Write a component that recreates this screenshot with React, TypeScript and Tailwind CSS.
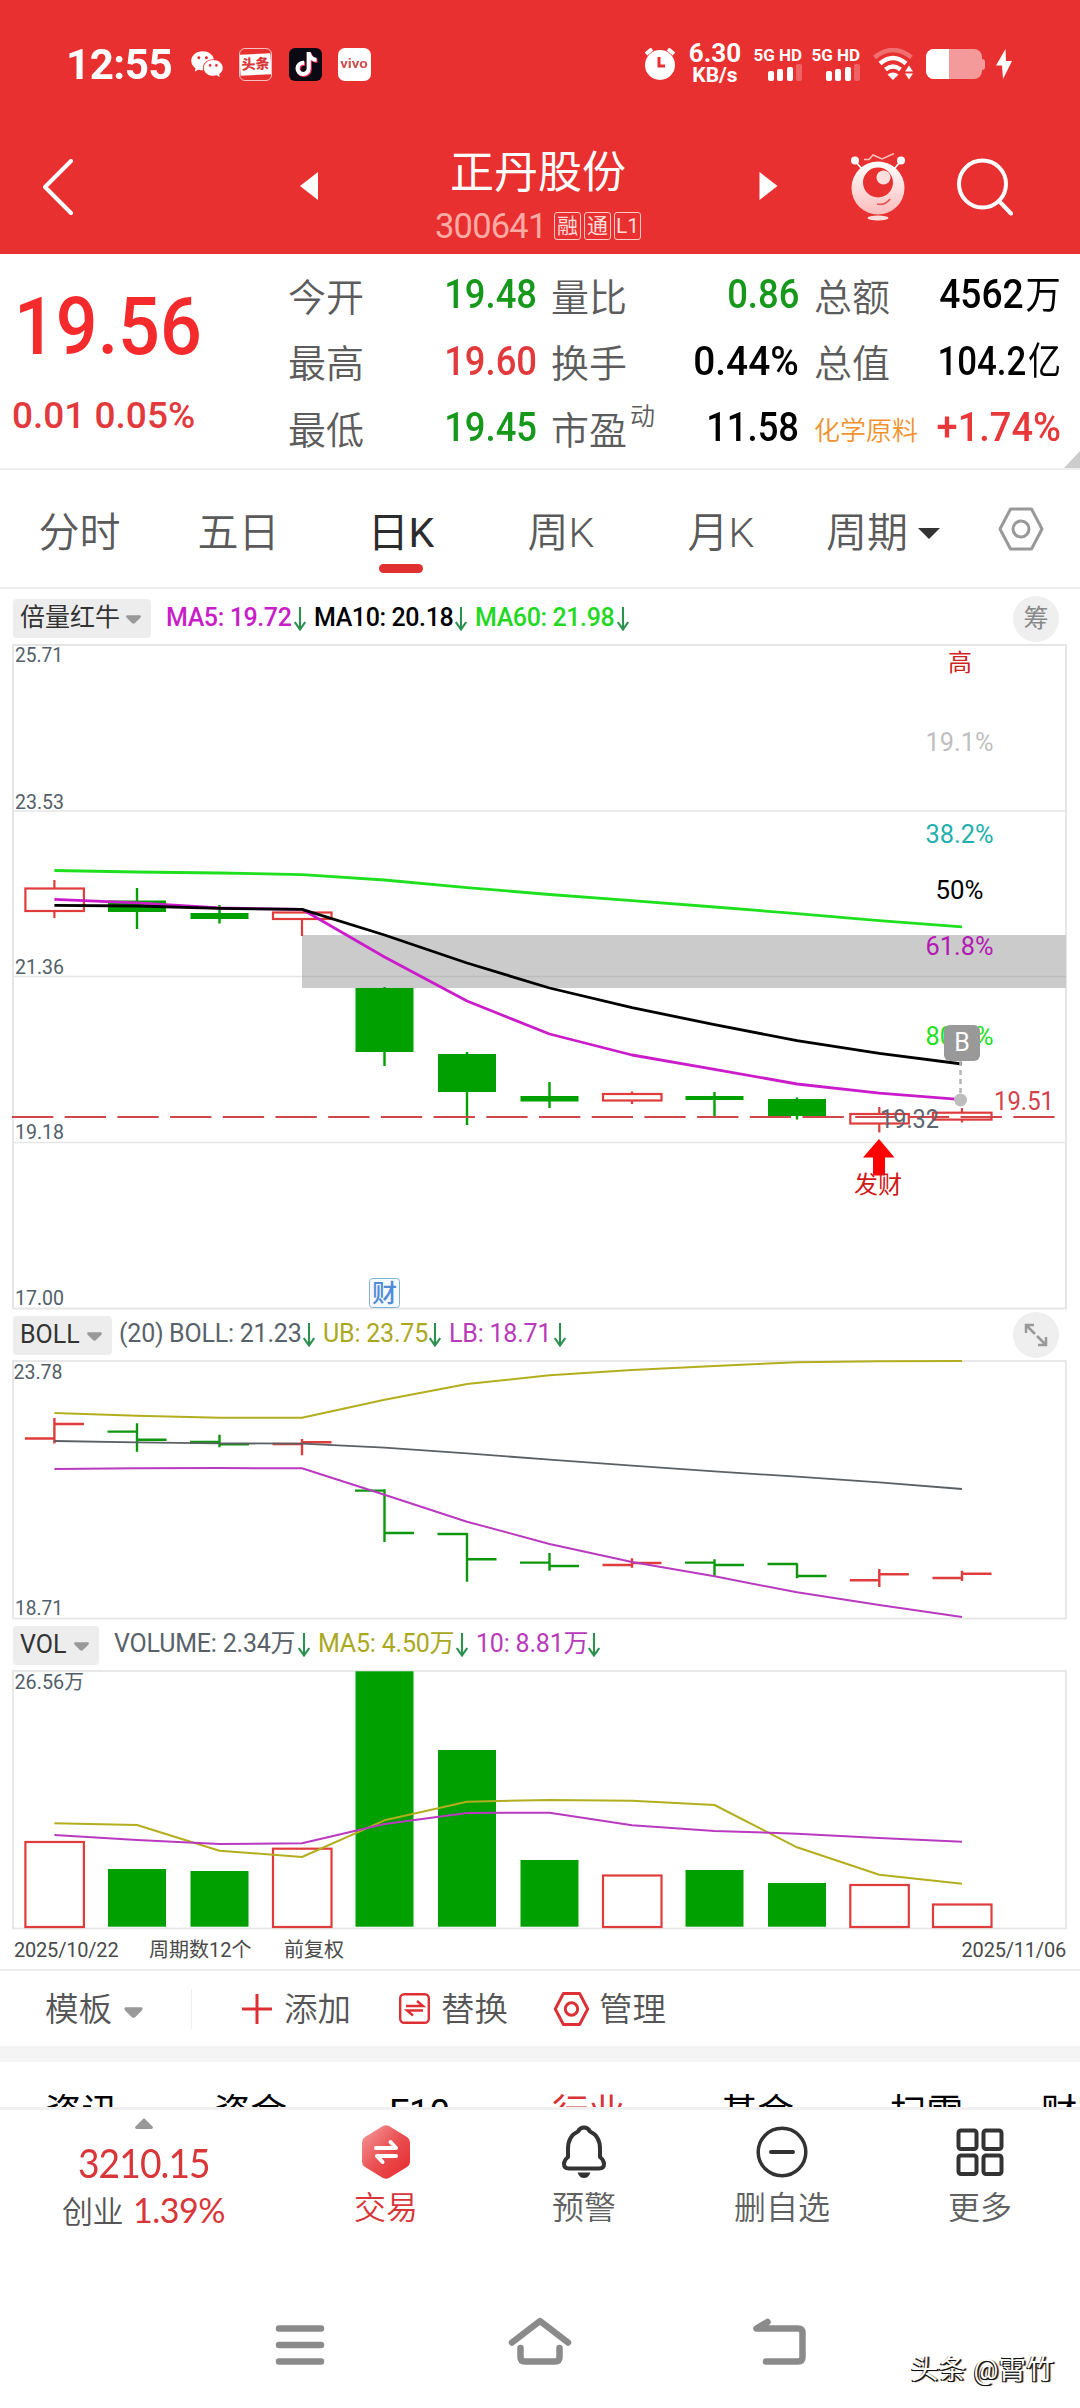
import React from 'react';
import clsx from 'clsx';
import { AiFillWechat } from 'react-icons/ai';
import { FaTiktok } from 'react-icons/fa';

const FONT = "font-['Roboto','Noto_Sans_CJK_SC',sans-serif]";

const GREEN = '#00a000';
const RED = '#e03c3c';
const GRID = '#e6e6e6';

// x centre of every trading day, shared by the three charts
const DAYS = [54.4, 137, 219.5, 302, 384.5, 467, 549.5, 632, 714.5, 797, 879.3, 962];

type Candle = { up: boolean; top: number; bottom: number; high: number; low: number };

const CANDLES: Candle[] = [
  { up: true, top: 888.5, bottom: 911, high: 880, low: 918 },
  { up: false, top: 900.5, bottom: 912, high: 888, low: 929 },
  { up: false, top: 913, bottom: 919, high: 905, low: 923.5 },
  { up: true, top: 912.5, bottom: 919, high: 912, low: 936 },
  { up: false, top: 988, bottom: 1052, high: 987, low: 1066 },
  { up: false, top: 1054, bottom: 1092, high: 1052, low: 1125 },
  { up: false, top: 1096, bottom: 1101.5, high: 1082, low: 1108 },
  { up: true, top: 1094, bottom: 1100.5, high: 1091.5, low: 1104 },
  { up: false, top: 1096, bottom: 1100, high: 1092, low: 1118 },
  { up: false, top: 1099, bottom: 1116, high: 1097.5, low: 1119.5 },
  { up: true, top: 1114, bottom: 1123.5, high: 1107, low: 1132.5 },
  { up: true, top: 1112.7, bottom: 1119.6, high: 1108, low: 1122.5 },
];

// [up, high, low, open, close]
const OHLC: [boolean, number, number, number, number][] = [
  [true, 1418, 1443.5, 1438.5, 1424],
  [false, 1423.3, 1451.7, 1431.6, 1439.7],
  [false, 1434.7, 1447.3, 1442, 1444.3],
  [true, 1439, 1455.3, 1444, 1442.3],
  [false, 1489.3, 1542, 1490.6, 1533],
  [false, 1533, 1581.7, 1534, 1559.3],
  [false, 1553, 1570.7, 1562.6, 1566],
  [true, 1558.3, 1567.7, 1565, 1563],
  [false, 1559.3, 1576.7, 1562.6, 1565],
  [false, 1563.3, 1578.3, 1564, 1576],
  [true, 1569, 1587, 1580.3, 1574.3],
  [true, 1570.7, 1581, 1578, 1573.7],
];

const VOLUMES: [boolean, number][] = [
  [true, 1841], [false, 1869], [false, 1871], [true, 1847.7], [false, 1671.3], [false, 1750],
  [false, 1860], [true, 1874.5], [false, 1870], [false, 1883], [true, 1884], [true, 1903.5],
];

const MA60 = [870.5, 872, 873, 874.6, 880, 887.6, 894.5, 900.6, 907, 913.6, 920.6, 926.8];
const MA5 = [899.3, 902.8, 908, 909.3, 957, 1001, 1034, 1055, 1069.3, 1084, 1093.2, 1099.7];
const MA10 = [905.4, 906, 908.4, 909.3, 935, 963, 988, 1007.7, 1024.6, 1040.7, 1053.3, 1064];
const UB = [1413, 1415.7, 1417.7, 1417.7, 1399.7, 1384, 1375.3, 1370, 1366, 1362.2, 1361.3, 1361];
const MID = [1441, 1442.3, 1443.3, 1443.7, 1447.7, 1453.3, 1459.7, 1465.7, 1471.3, 1476.7, 1482.3, 1489];
const LB = [1469, 1468.3, 1468, 1468.3, 1494.7, 1521.7, 1544, 1562, 1576.3, 1592.3, 1605, 1617];
const VMA5 = [1823.3, 1825, 1850.7, 1857, 1820.3, 1801.7, 1800, 1800.7, 1805, 1847.3, 1874.7, 1883.7];
const VMA10 = [1835, 1840, 1844, 1843.3, 1824, 1813, 1812.7, 1825.3, 1831, 1833.7, 1838, 1841.7];

const LEVELS = [
  { text: '19.1%', y: 751, fill: '#bfbfbf', w: 68 },
  { text: '38.2%', y: 843, fill: '#22b0ae', w: 68 },
  { text: '50%', y: 899, fill: '#000', w: 48 },
  { text: '61.8%', y: 955, fill: '#b418b4', w: 68 },
  { text: '80.9%', y: 1044.5, fill: '#22e022', w: 68 },
];

function Line({ ys, color, width = 2 }: { ys: number[]; color: string; width?: number }) {
  return (
    <polyline
      points={ys.map((y, i) => `${DAYS[i]},${y}`).join(' ')}
      fill="none"
      stroke={color}
      strokeWidth={width}
      strokeLinejoin="round"
    />
  );
}

function AxisLabel({ x = 15, y, w = 48, children }: { x?: number; y: number; w?: number; children: React.ReactNode }) {
  return (
    <text x={x} y={y} fontSize={20} fill="#525e68" textLength={w} lengthAdjust="spacingAndGlyphs">
      {children}
    </text>
  );
}

function Caret({ className }: { className?: string }) {
  return (
    <svg viewBox="0 0 20 12" className={clsx('shrink-0', className)}>
      <path d="M2 1h16q1.5 1.5 0 3l-6.500 6.500q-1.500 1-3 0L2 4Q.5 2.500 2 1z" fill="currentColor" />
    </svg>
  );
}

function DownArrow() {
  return (
    <svg viewBox="0 0 12 24" className="h-[24px] w-[12px] shrink-0" fill="none" stroke="#2c9150" strokeWidth="2.100">
      <path d="M6 0v23M.8 15l5.200 7.500 5.200-7.500" />
    </svg>
  );
}

function Hexagon({ className, strokeWidth }: { className: string; strokeWidth: number }) {
  return (
    <svg viewBox="0 0 46 44" className={className} fill="none" stroke="currentColor" strokeWidth={strokeWidth} strokeLinejoin="round">
      <path d="M12.500 2h21L44 22 33.500 42h-21L2 22z" />
      <circle cx="23" cy="22" r="8" />
    </svg>
  );
}

function StatusBar() {
  return (
    <div className="flex h-[128px] items-center pl-[66px] text-white">
      <span className="w-[106px] origin-left scale-x-[0.98] text-[43px] leading-none font-bold tracking-[-0.5px]">12:55</span>
      <AiFillWechat className="ml-[17px] size-[36px]" />
      <div className="ml-[14px] flex size-[33px] flex-col justify-center overflow-hidden rounded-[6px] border border-white/70">
        <span className="-rotate-3 bg-white text-center text-[14px] leading-[21px] font-black text-[#d83a3a]">头条</span>
      </div>
      <div className="ml-[17px] flex size-[33px] items-center justify-center rounded-[6px] bg-[#0b0a14]">
        <FaTiktok className="size-[24px] drop-shadow-[1px_1px_0_#fe2c55]" />
      </div>
      <div className="ml-[16px] flex size-[33px] items-center justify-center rounded-[7px] bg-white">
        <span className="scale-x-125 text-[12px] leading-none font-bold text-[#cf5050]">vivo</span>
      </div>

      <svg viewBox="0 0 32 32" className="ml-[273px] h-[32px] w-[32px]" fill="#fff">
        <circle cx="16" cy="17" r="15" />
        <path d="M2 6l6-5M24 1l6 5" stroke="#fff" strokeWidth="4" />
        <path d="M15 9v9h6" fill="none" stroke="#e83030" strokeWidth="3" />
      </svg>
      <div className="ml-[12px] flex w-[54px] flex-col items-center leading-none font-bold">
        <span className="text-[26px] leading-[23px]">6.30</span>
        <span className="text-[21px] leading-[21px]">KB/s</span>
      </div>
      <Signal className="ml-[12px]" />
      <Signal className="ml-[10px]" />
      <svg viewBox="0 0 40 32" className="ml-[13px] h-[32px] w-[40px]" fill="none" stroke="#fff" strokeWidth="4.500">
        <path d="M1.500 9.500Q20-5.500 38.500 9.500" strokeOpacity=".3" />
        <path d="M7 15.500Q20 4.500 33 15.500M12.500 21.500q7.500-6 15 0" />
        <path d="M14.500 26.500q5.500-4 11 0L20 32z" fill="#fff" stroke="none" />
        <path d="M32 23.500l4-6 4 6zM32 25.500l4 6 4-6z" fill="#fff" stroke="none" />
      </svg>
      <div className="ml-[13px] flex items-center">
        <div className="flex h-[30px] w-[56px] overflow-hidden rounded-[8px] bg-[#f59a9a]">
          <div className="w-[23px] bg-white" />
        </div>
        <div className="h-[11px] w-[3px] rounded-r-full bg-[#f59a9a]" />
      </div>
      <svg viewBox="0 0 16 30" className="ml-[11px] h-[30px] w-[16px]" fill="#fff">
        <path d="M9.500 0L0 16.500h6L7 30l9-18H10z" />
      </svg>
    </div>
  );
}

function Signal({ className }: { className: string }) {
  return (
    <div className={clsx('flex w-[48px] flex-col items-end', className)}>
      <span className="text-[17px] leading-[14px] font-bold whitespace-nowrap">5G HD</span>
      <div className="mt-[2px] flex h-[17px] items-end gap-[3.500px]">
        <i className="h-[10px] w-[6px] rounded-[2px] bg-white" />
        <i className="h-[12px] w-[6px] rounded-[2px] bg-white" />
        <i className="h-[14px] w-[6px] rounded-[2px] bg-white" />
        <i className="h-[17px] w-[6px] rounded-[2px] bg-white/25" />
      </div>
    </div>
  );
}

function TitleBar() {
  return (
    <div className="flex h-[126px] items-start text-white">
      <svg viewBox="0 0 30 56" className="mt-[31px] ml-[43px] h-[56px] w-[30px]" fill="none" stroke="#fff" strokeWidth="4" strokeLinecap="round" strokeLinejoin="round">
        <path d="M28 2L2 28l26 26" />
      </svg>
      <svg viewBox="0 0 18 28" className="mt-[44px] ml-[227px] h-[28px] w-[18px]" fill="#fff">
        <path d="M18 0v28L0 14z" />
      </svg>
      <div className="mt-[21px] ml-[111px] flex w-[218px] flex-col items-center">
        <h1 className="text-[44px] leading-[48px] whitespace-nowrap">正丹股份</h1>
        <div className="mt-[15px] flex items-center gap-[3px]">
          <span className="mr-[6px] w-[110px] text-[34.500px] leading-[28px] tracking-[-0.8px] text-[#fbaaa4]">300641</span>
          {['融', '通', 'L1'].map((tag) => (
            <span key={tag} className="flex h-[28px] w-[27px] items-center justify-center rounded-[3px] border border-[#ffc9c4] text-[21px] leading-none text-[#ffdcd8]">
              {tag}
            </span>
          ))}
        </div>
      </div>
      <svg viewBox="0 0 18 28" className="mt-[44px] ml-[112px] h-[28px] w-[19px]" fill="#fff">
        <path d="M0 0v28l18-14z" />
      </svg>
      <svg viewBox="0 0 54 68" className="mt-[25px] ml-[73px] h-[68px] w-[54px]">
        <defs>
          <linearGradient id="mascot" x1="0" y1="0" x2="0" y2="1">
            <stop offset="0" stopColor="#fff" />
            <stop offset="1" stopColor="#fbbcbc" />
          </linearGradient>
        </defs>
        <path d="M4 8l7 8M50 8l-7 8" stroke="#fff" strokeWidth="1.800" />
        <circle cx="4" cy="7.500" r="4" fill="#fff" />
        <circle cx="50" cy="7.500" r="4" fill="#fff" />
        <path d="M13 6.500h5l4-4.500 9 4 12-5.500" stroke="#fbc0bc" strokeWidth="1.500" fill="none" />
        <circle cx="27" cy="35" r="26.500" fill="url(#mascot)" />
        <circle cx="27" cy="29.500" r="15" fill="#e83030" />
        <circle cx="32.500" cy="24.500" r="7" fill="#fde0de" />
        <path d="M26 51q8 2 13-5" stroke="#e05555" strokeWidth="1.800" fill="none" />
        <ellipse cx="27" cy="65" rx="10.500" ry="2.500" fill="#fdd" />
      </svg>
      <svg viewBox="0 0 56 58" className="mt-[30px] ml-[52px] h-[58px] w-[56px]" fill="none" stroke="#fff" strokeWidth="4" strokeLinecap="round">
        <circle cx="25.500" cy="26" r="23.500" />
        <path d="M42 43l12 12.500" />
      </svg>
    </div>
  );
}

type Field = { label: string; sup?: string; value: string; color: string; unit?: string; small?: boolean; scale?: string };

const COL_A: Field[] = [
  { label: '今开', value: '19.48', color: 'text-[#16981a]' },
  { label: '最高', value: '19.60', color: 'text-[#e23a3c]' },
  { label: '最低', value: '19.45', color: 'text-[#16981a]' },
];
const COL_B: Field[] = [
  { label: '量比', value: '0.86', color: 'text-[#16981a]' },
  { label: '换手', value: '0.44%', color: 'text-black', scale: 'scale-x-[0.97]' },
  { label: '市盈', sup: '动', value: '11.58', color: 'text-black' },
];
const COL_C: Field[] = [
  { label: '总额', value: '4562', unit: '万', color: 'text-black', scale: 'scale-x-[0.93]' },
  { label: '总值', value: '104.2', unit: '亿', color: 'text-black', scale: 'scale-x-[0.87]' },
  { label: '化学原料', value: '+1.74%', color: 'text-[#e8383a]', small: true, scale: 'scale-x-[0.95]' },
];

function QuoteColumn({ fields, className }: { fields: Field[]; className: string }) {
  return (
    <div className={clsx('flex flex-col pt-[11px]', className)}>
      {fields.map((f) => (
        <div key={f.label} className="flex h-[66.500px] items-center justify-between whitespace-nowrap">
          {f.small ? (
            <span className="text-[26px] font-[350] text-[#f0922e]">{f.label}</span>
          ) : (
            <span className="flex text-[38px] font-[350] text-[#5c5c5c]">
              {f.label}
              {f.sup && <sup className="top-0 mt-[1px] ml-[3px] text-[25px] leading-none">{f.sup}</sup>}
            </span>
          )}
          <span className={clsx('mt-[-6px] flex origin-right items-center text-[40px] font-medium', f.scale ?? 'scale-x-[0.91]', f.color)}>
            {f.value}
            {f.unit && <span className="ml-[2px] text-[38px] font-normal">{f.unit}</span>}
          </span>
        </div>
      ))}
    </div>
  );
}

function Quote() {
  return (
    <section className="relative flex h-[216px] border-b-2 border-[#eee] bg-white">
      <div className="w-[275px] text-[#f52a2c]">
        <div className="mt-[33px] ml-[14px] origin-left scale-x-[0.92] text-[80px] leading-[80px] font-medium">19.56</div>
        <div className="mt-[27px] ml-[12px] origin-left text-[37px] leading-[44px] font-medium whitespace-nowrap text-[#e23a3c]">
          0.01 0.05%
        </div>
      </div>
      <QuoteColumn fields={COL_A} className="ml-[13px] w-[249px]" />
      <QuoteColumn fields={COL_B} className="ml-[14px] w-[248px]" />
      <QuoteColumn fields={COL_C} className="ml-[15px] w-[247px]" />
      <svg viewBox="0 0 16 17" className="absolute right-0 bottom-0 h-[17px] w-[16px]">
        <path d="M16 0v17H0z" fill="#ccc" />
      </svg>
    </section>
  );
}

const TABS = [
  { label: '分时', width: 'w-[159px]' },
  { label: '五日', width: 'w-[159px]' },
  { label: '日K', width: 'w-[166px]', active: true },
  { label: '周K', width: 'w-[154px]' },
  { label: '月K', width: 'w-[166px]' },
];

function PeriodTabs() {
  return (
    <nav className="flex h-[119px] items-start border-b-2 border-[#eee] text-[41px] font-[350] text-[#5a5a5a]">
      {TABS.map((tab) => (
        <div key={tab.label} className={clsx('flex flex-col items-center pt-[36px]', tab.width, tab.active && 'font-normal text-[#2c2c2c]')}>
          <span className="leading-[54px]">{tab.label}</span>
          {tab.active && <span className="mt-[4px] h-[9px] w-[44px] rounded-full bg-[#e03030]" />}
        </div>
      ))}
      <div className="ml-[22px] flex items-center pt-[36px]">
        <span className="leading-[54px]">周期</span>
        <svg viewBox="0 0 22 11" className="ml-[10px] h-[11px] w-[22px]">
          <path d="M0 0h22L11 11z" fill="#333" />
        </svg>
      </div>
      <Hexagon className="mt-[37px] ml-[58px] h-[44px] w-[46px] text-[#999]" strokeWidth={3} />
    </nav>
  );
}

type Legend = { text: string; color: string; width: string; gap: string; arrow?: boolean };

const MA_LEGEND: Legend[] = [
  { text: 'MA5: 19.72', color: 'text-[#c81ec8]', width: 'w-[128px]', gap: 'ml-[15px]', arrow: true },
  { text: 'MA10: 20.18', color: 'text-black', width: 'w-[141px]', gap: 'ml-[8px]', arrow: true },
  { text: 'MA60: 21.98', color: 'text-[#22d822]', width: 'w-[142px]', gap: 'ml-[8px]', arrow: true },
];
const BOLL_LEGEND: Legend[] = [
  { text: '(20)', color: 'text-[#5a6269]', width: 'w-[41px]', gap: 'ml-[7px]' },
  { text: 'BOLL: 21.23', color: 'text-[#5a6269]', width: 'w-[134px]', gap: 'ml-[9px]', arrow: true },
  { text: 'UB: 23.75', color: 'text-[#aaa81e]', width: 'w-[106px]', gap: 'ml-[8px]', arrow: true },
  { text: 'LB: 18.71', color: 'text-[#b93ab9]', width: 'w-[105px]', gap: 'ml-[8px]', arrow: true },
];
const VOL_LEGEND: Legend[] = [
  { text: 'VOLUME: 2.34万', color: 'text-[#5a6269]', width: 'w-[184px]', gap: 'ml-[15px]', arrow: true },
  { text: 'MA5: 4.50万', color: 'text-[#aaa81e]', width: 'w-[138px]', gap: 'ml-[8px]', arrow: true },
  { text: '10: 8.81万', color: 'text-[#b93ab9]', width: 'w-[112px]', gap: 'ml-[8px]', arrow: true },
];

function LegendRow({ name, chip, items, className, medium, children }: {
  name: string;
  chip: string;
  items: Legend[];
  className: string;
  medium?: boolean;
  children?: React.ReactNode;
}) {
  return (
    <div className={clsx('flex items-center pl-[13px] text-[25px]', className)}>
      <div className={clsx('flex h-[39px] items-center justify-between rounded-[4px] bg-[#ededed] pr-[9px] pl-[7px] text-[#333]', chip)}>
        <span className="mt-[-2px] leading-none whitespace-nowrap">{name}</span>
        <Caret className="mt-[2px] h-[11px] w-[17px] text-[#999]" />
      </div>
      {items.map((item) => (
        <React.Fragment key={item.text}>
          <span className={clsx('mt-[-3px] leading-none whitespace-nowrap', medium ? 'font-medium tracking-[-0.4px]' : 'tracking-[-0.2px]', item.color, item.width, item.gap)}>
            {item.text}
          </span>
          {item.arrow && <DownArrow />}
        </React.Fragment>
      ))}
      <div className="mr-[21px] ml-auto">{children}</div>
    </div>
  );
}

function KChart() {
  return (
    <svg viewBox="0 644 1080 666" className="block h-[666px] w-[1080px]">
      <rect x="13" y="645" width="1053" height="663.500" fill="none" stroke={GRID} strokeWidth="2" />
      <rect x="302" y="935" width="764" height="53" fill="#cbcbcb" />
      {[811, 1142.5].map((y) => (
        <path key={y} d={`M13 ${y}H1066`} stroke={GRID} strokeWidth="1.500" />
      ))}
      <path d="M13 976.500H302" stroke={GRID} strokeWidth="1.500" />
      <path d="M302 976.500H1066" stroke="#bcbcbc" strokeWidth="1.500" />

      {CANDLES.map((c, i) => {
        const x = DAYS[i];
        return c.up ? (
          <g key={i} stroke={RED} strokeWidth="2.200" fill="#fff">
            <path d={`M${x} ${c.high}V${c.low}`} />
            <rect x={x - 29} y={c.top} width={58.5} height={c.bottom - c.top} />
          </g>
        ) : (
          <g key={i} fill={GREEN}>
            <rect x={x - 29} y={c.top} width={58} height={c.bottom - c.top} />
            <rect x={x - 1.2} y={c.high} width={2.4} height={c.low - c.high} />
          </g>
        );
      })}

      <Line ys={MA60} color="#1fe01f" width={2.8} />
      <Line ys={MA5} color="#cb1ccb" width={2.8} />
      <Line ys={MA10} color="#000" width={2.8} />
      <path d="M12 1117H1057" stroke="#d0464b" strokeWidth="1.800" strokeDasharray="41.300 11.400" />

      <AxisLabel y={661.5}>25.71</AxisLabel>
      <AxisLabel y={808.5} w={49}>23.53</AxisLabel>
      <AxisLabel y={973.5} w={49}>21.36</AxisLabel>
      <AxisLabel y={1139} w={49}>19.18</AxisLabel>
      <AxisLabel y={1305} w={49}>17.00</AxisLabel>

      <text x="960" y="671" textAnchor="middle" fontSize="24" fill="#cf1f1f">高</text>
      {LEVELS.map((l) => (
        <text key={l.text} x={959.5 - l.w / 2} y={l.y} fontSize="25" fill={l.fill} textLength={l.w} lengthAdjust="spacingAndGlyphs">{l.text}</text>
      ))}
      <text x="994" y="1109.500" fontSize="25" fill="#d3424a" textLength="60" lengthAdjust="spacingAndGlyphs">19.51</text>
      <text x="880" y="1127.500" fontSize="25" fill="#5d6670" textLength="59" lengthAdjust="spacingAndGlyphs">19.32</text>

      <path d="M960.500 1061v34" stroke="#b5b5b5" strokeWidth="2.500" strokeDasharray="5 4" />
      <rect x="944" y="1025" width="36" height="36" rx="6" fill="#999" />
      <text x="962" y="1051" textAnchor="middle" fontSize="25" fill="#fff">B</text>
      <circle cx="960.500" cy="1100" r="6.500" fill="#bdbdbd" />

      <path d="M879 1139l15.500 18.500h-9.500v18h-12v-18h-10z" fill="#f00" />
      <text x="878" y="1193" textAnchor="middle" fontSize="24" fill="#d01818">发财</text>

      <rect x="369.500" y="1278.500" width="30" height="29" rx="3" fill="#f5faff" stroke="#7fb3d8" />
      <text x="384.500" y="1302" textAnchor="middle" fontSize="25" fontWeight="500" fill="#4f8bd6">财</text>
    </svg>
  );
}

function BollChart() {
  return (
    <svg viewBox="0 1360 1080 260" className="block h-[260px] w-[1080px]">
      <rect x="13" y="1361" width="1053" height="257.500" fill="none" stroke={GRID} strokeWidth="1.800" />
      {OHLC.map(([up, high, low, open, close], i) => (
        <path
          key={i}
          d={`M${DAYS[i]} ${high}V${low}M${DAYS[i] - 29.5} ${open}h29.5M${DAYS[i]} ${close}h29.5`}
          stroke={up ? RED : '#0f960f'}
          strokeWidth="2.400"
          fill="none"
        />
      ))}
      <Line ys={UB} color="#b2ae1e" />
      <Line ys={MID} color="#5a6064" width={1.8} />
      <Line ys={LB} color="#b93ac0" />
      <AxisLabel x={13.5} y={1378.5} w={49}>23.78</AxisLabel>
      <AxisLabel y={1615} w={48}>18.71</AxisLabel>
    </svg>
  );
}

function VolumeChart() {
  return (
    <svg viewBox="0 1670 1080 260" className="block h-[260px] w-[1080px]">
      <rect x="13" y="1671" width="1053" height="257.500" fill="none" stroke={GRID} strokeWidth="1.800" />
      {VOLUMES.map(([up, top], i) =>
        up ? (
          <rect key={i} x={DAYS[i] - 29} y={top + 1} width={58.5} height={1926 - top} fill="#fff" stroke={RED} strokeWidth="2.200" />
        ) : (
          <rect key={i} x={DAYS[i] - 29} y={top} width={58} height={1926.7 - top} fill={GREEN} />
        ),
      )}
      <Line ys={VMA5} color="#b2ae1e" />
      <Line ys={VMA10} color="#b93ac0" />
      <AxisLabel x={14.5} y={1688.5} w={69.5}>26.56万</AxisLabel>
    </svg>
  );
}

function Toolbar() {
  return (
    <div className="flex h-[77px] items-center border-t-2 border-[#ececec] pl-[45px] text-[33.500px] font-[350] text-[#555]">
      <span className="mt-[3px]">模板</span>
      <Caret className="mt-[7px] ml-[11px] h-[13px] w-[21px] text-[#999]" />
      <i className="ml-[47px] h-[40px] w-px bg-[#eee]" />
      <svg viewBox="0 0 30 30" className="ml-[50px] size-[30px]" stroke="#dd3034" strokeWidth="3">
        <path d="M15 0v30M0 15h30" />
      </svg>
      <span className="mt-[3px] ml-[12px]">添加</span>
      <svg viewBox="0 0 31 31" className="ml-[48px] size-[31px]" fill="none" stroke="#dd3034" strokeWidth="2.400">
        <rect x="1.200" y="1.200" width="28.600" height="28.600" rx="4" />
        <path d="M7 13h17l-6-5M24 17.500H8l6 5" />
      </svg>
      <span className="mt-[3px] ml-[11px]">替换</span>
      <Hexagon className="ml-[45px] h-[34px] w-[37px] text-[#dd3034]" strokeWidth={3.8} />
      <span className="mt-[3px] ml-[9px]">管理</span>
    </div>
  );
}

const INFO_TABS = ['资讯', '资金', 'F10', '行业', '基金', '扫雷', '财富号'];

function InfoTabs() {
  return (
    <div className="h-[64px] overflow-hidden border-t-[16px] border-b-[3px] border-t-[#f4f4f4] border-b-[#f0f0f0]">
      <div className="ml-[-3px] flex w-[1200px] pt-[24px] text-[36.500px] text-black">
        {INFO_TABS.map((tab) => (
          <span key={tab} className={clsx('w-[169px] shrink-0 text-center leading-[54px]', tab === '行业' && 'text-[#d83438]')}>
            {tab}
          </span>
        ))}
      </div>
    </div>
  );
}

function Action({ label, className, children }: { label: string; className?: string; children: React.ReactNode }) {
  return (
    <div className={clsx('flex w-[198px] flex-col items-center pt-[15px]', className ?? 'text-[#606060]')}>
      <div className="flex h-[54px] items-center">{children}</div>
      <span className="mt-[7px] text-[32px] leading-[44px] font-[350]">{label}</span>
    </div>
  );
}

function ActionBar() {
  return (
    <div className="flex h-[150px] items-start">
      <div className="flex w-[287px] flex-col items-center pt-[8px] font-['Lato','Noto_Sans_CJK_SC',sans-serif] text-[#d9363a]">
        <svg viewBox="0 0 18 11" className="h-[11px] w-[18px]">
          <path d="M9 0l9 9q0 2-2 2H2q-2 0-2-2z" fill="#999" />
        </svg>
        <span className="mt-[10px] scale-x-[0.93] text-[40px] leading-[48px] tracking-[-1px]">3210.15</span>
        <span className="mt-[1px] text-[34px] leading-[44px] tracking-[-0.5px] whitespace-nowrap">
          <span className="mr-[10px] text-[31px] font-[350] text-[#555]">创业</span>1.39%
        </span>
      </div>
      <Action label="交易" className="text-[#d9363a]">
        <svg viewBox="0 0 48 54" className="h-[54px] w-[48px]">
          <defs>
            <linearGradient id="trade" x1="0" y1="0" x2="1" y2="1">
              <stop offset="0" stopColor="#f5a0a0" />
              <stop offset=".5" stopColor="#ea5052" />
              <stop offset="1" stopColor="#e6282c" />
            </linearGradient>
          </defs>
          <path d="M21 1q3-1.500 6 0l18 11q3 2 3 5v20q0 3-3 5L27 53q-3 1.500-6 0L3 42q-3-2-3-5V17q0-3 3-5z" fill="url(#trade)" />
          <path d="M14 23h20l-5.500-6M34 31H15l5.500 6" fill="none" stroke="#fff" strokeWidth="4" strokeLinecap="round" strokeLinejoin="round" />
        </svg>
      </Action>
      <Action label="预警">
        <svg viewBox="0 0 44 54" className="h-[54px] w-[44px]" fill="none" stroke="#333" strokeWidth="4" strokeLinejoin="round">
          <path d="M22 2.500q-4 0-6 4Q6 11 6 24v8q-4 3-4 7 0 4.500 5 4.500h30q5 0 5-4.500 0-4-4-7v-8q0-13-10-17.500-2-4-6-4z" />
          <path d="M15.500 47.500h13q-2 5.500-6.500 5.500t-6.500-5.500z" fill="#333" stroke="none" />
        </svg>
      </Action>
      <Action label="删自选">
        <svg viewBox="0 0 52 52" className="size-[52px]" fill="none" stroke="#333" strokeWidth="3.500" strokeLinecap="round">
          <circle cx="26" cy="26" r="23.800" />
          <path d="M15 26h22" strokeWidth="4" />
        </svg>
      </Action>
      <Action label="更多">
        <svg viewBox="0 0 48 48" className="size-[48px]" fill="none" stroke="#333" strokeWidth="4">
          <rect x="2.500" y="2.500" width="18" height="18.500" rx="2.500" />
          <rect x="27.500" y="2.500" width="18" height="18.500" rx="2.500" />
          <rect x="2.500" y="27.500" width="18" height="18.500" rx="2.500" />
          <rect x="27.500" y="27.500" width="18" height="18.500" rx="2.500" />
        </svg>
      </Action>
    </div>
  );
}

function SystemNav() {
  return (
    <div className="relative flex h-[148px] items-start pt-[56px]">
      <svg viewBox="0 0 50 50" className="ml-[275px] size-[50px]" stroke="#8b8b8b" strokeWidth="6.500" strokeLinecap="round">
        <path d="M4 12.500h42M4 29h42M4 45.500h42" />
      </svg>
      <svg viewBox="0 0 64 50" className="ml-[183px] h-[50px] w-[64px]" fill="none" stroke="#8b8b8b" strokeWidth="6.500" strokeLinecap="round" strokeLinejoin="round">
        <path d="M4 26.500L32 5l28 21.500M12.500 32v9q0 4.500 4.500 4.500h30q4.500 0 4.500-4.500v-9" />
      </svg>
      <svg viewBox="0 0 56 50" className="ml-[180px] h-[50px] w-[56px]" fill="none" stroke="#8b8b8b" strokeWidth="6.500" strokeLinecap="round" strokeLinejoin="round">
        <path d="M15.500 6L4.500 12.500H46q4.500 0 4.500 4.500v24q0 4.500-4.500 4.500H14" />
      </svg>
      <span className="absolute right-[26px] bottom-[20px] text-[27.500px] leading-[36px] tracking-[0.3px] whitespace-nowrap text-white [text-shadow:-1px_1px_0_#111,1px_1px_0_#111,2px_1px_1px_#333]">
        头条 @霄竹
      </span>
    </div>
  );
}

export default function App() {
  return (
    <div className={clsx('flex h-[2408px] w-[1080px] flex-col overflow-hidden bg-white', FONT)}>
      <header className="h-[254px] bg-[#e83030]">
        <StatusBar />
        <TitleBar />
      </header>
      <Quote />
      <PeriodTabs />
      <LegendRow name="倍量红牛" chip="w-[138px]" items={MA_LEGEND} className="h-[55px] pt-[4px]" medium>
        <div className="flex size-[46px] items-center justify-center rounded-full bg-[#efefef] text-[25px] text-[#888]">筹</div>
      </LegendRow>
      <KChart />
      <LegendRow name="BOLL" chip="w-[99px]" items={BOLL_LEGEND} className="h-[50px]">
        <div className="flex size-[46px] items-center justify-center rounded-full bg-[#efefef]">
          <svg viewBox="0 0 24 24" className="size-[24px]" fill="none" stroke="#999" strokeWidth="2.500">
            <path d="M2 10V2h8M2 2l9 9M22 14v8h-8M22 22l-9-9" />
          </svg>
        </div>
      </LegendRow>
      <BollChart />
      <LegendRow name="VOL" chip="w-[86px]" items={VOL_LEGEND} className="h-[50px]" />
      <VolumeChart />
      <div className="flex h-[39px] items-center px-[14px] text-[20px] text-[#4a4a4a]">
        <span className="w-[135px] tracking-[-0.2px]">2025/10/22</span>
        <span className="w-[135px]">周期数12个</span>
        <span>前复权</span>
        <span className="ml-auto tracking-[-0.2px]">2025/11/06</span>
      </div>
      <Toolbar />
      <InfoTabs />
      <ActionBar />
      <SystemNav />
    </div>
  );
}
